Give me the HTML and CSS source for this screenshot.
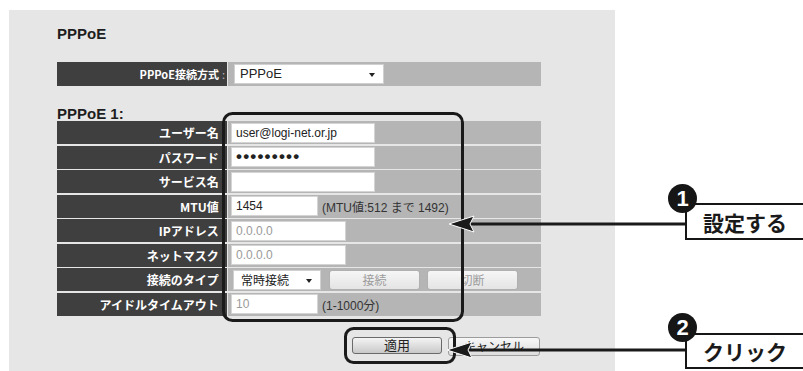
FILE: index.html
```html
<!DOCTYPE html>
<html lang="ja">
<head>
  <meta charset="UTF-8">
  <title>PPPoE</title>
  <link rel="stylesheet" href="styles.css">
</head>
<body>
  <div class="panel">
    <h2 class="title">PPPoE</h2>
    <div class="form form-mode">
      <div class="label">PPPoE接続方式<span class="colon">:</span></div>
      <div class="value"><span class="select select-wide">PPPoE<i class="caret"></i></span></div>
    </div>
    <h3 class="subtitle">PPPoE 1:</h3>
    <div class="form">
      <div class="label">ユーザー名<span class="colon">:</span></div>
      <div class="value"><span class="field">user@logi-net.or.jp</span></div>
      <div class="label">パスワード<span class="colon">:</span></div>
      <div class="value"><span class="field dots">•••••••••</span></div>
      <div class="label">サービス名<span class="colon">:</span></div>
      <div class="value"><span class="field"></span></div>
      <div class="label">MTU値<span class="colon">:</span></div>
      <div class="value"><span class="field field-s">1454</span><span class="note">(MTU値:512 まで 1492)</span></div>
      <div class="label">IPアドレス<span class="colon">:</span></div>
      <div class="value"><span class="field field-m muted">0.0.0.0</span></div>
      <div class="label">ネットマスク<span class="colon">:</span></div>
      <div class="value"><span class="field field-m muted">0.0.0.0</span></div>
      <div class="label">接続のタイプ<span class="colon">:</span></div>
      <div class="value">
        <span class="select select-s">常時接続<i class="caret"></i></span>
        <button class="btn btn-off">接続</button>
        <button class="btn btn-off">切断</button>
      </div>
      <div class="label">アイドルタイムアウト<span class="colon">:</span></div>
      <div class="value"><span class="field field-s muted">10</span><span class="note">(1-1000分)</span></div>
    </div>
    <div class="actions">
      <button class="btn btn-apply">適用</button>
      <button class="btn btn-cancel">キャンセル</button>
    </div>
  </div>

  <!-- 注釈 -->
  <svg class="marks" width="803" height="371" viewBox="0 0 803 371">
    <rect x="223.5" y="113.5" width="239" height="207" rx="9" fill="none" stroke="#1a1a1a" stroke-width="3"/>
    <rect x="345.5" y="328.5" width="109" height="34" rx="8" fill="none" stroke="#1a1a1a" stroke-width="3"/>
    <line x1="468" y1="224" x2="686" y2="224" stroke="#1a1a1a" stroke-width="3"/>
    <polygon points="449,224 474,216 470,224 474,232" fill="#1a1a1a" stroke="#fff" stroke-width="1"/>
    <line x1="466" y1="350" x2="686" y2="350" stroke="#1a1a1a" stroke-width="3"/>
    <polygon points="447,350 472,342 468,350 472,358" fill="#1a1a1a" stroke="#fff" stroke-width="1"/>
  </svg>
  <div class="callout callout-1">
    <span class="tag">設定する</span>
    <span class="num">1</span>
  </div>
  <div class="callout callout-2">
    <span class="tag">クリック</span>
    <span class="num">2</span>
  </div>
</body>
</html>
```

FILE: styles.css
```css
html, body { margin:0;padding:0;width:100%;height:100%;overflow:hidden;background:#fff }
body { font-family:"Liberation Sans", "Noto Sans CJK JP", sans-serif;color:#222;position:relative }

.panel { margin:10px 0 0 9px;width:606px;height:361px;background:#e6e6e6;padding:15px 0 0 48px;box-sizing:border-box }
.title { margin:0;font-size:15px;line-height:18px;font-weight:bold;color:#1e1e1e }
.subtitle { margin:20px 0 0;font-size:15px;line-height:15px;font-weight:bold;color:#1e1e1e }

.form { display:grid;grid-template-columns:170px 313px;column-gap:1px;row-gap:1.5px;grid-auto-rows:23px }
.form-mode { margin-top:19px;grid-auto-rows:24px }
.label { background:#3f3f3f;color:#fff;font-family:"Noto Sans CJK JP", sans-serif;font-weight:bold;font-size:12px;line-height:23px;text-align:right;padding-right:2px;white-space:nowrap }
.form-mode .label { font-size:11px;line-height:24px }
.colon { color:#b8b8b8;margin-left:3px;font-weight:normal }
.value { background:#b5b5b5;display:flex;align-items:center;padding-left:3px;gap:4px }

.field { display:block;box-sizing:border-box;width:144px;height:20px;background:#fff;border:1px solid #d4d4d4;font-size:12px;line-height:18px;padding-left:4px;color:#222;white-space:nowrap }
.field-s { width:87px }
.field-m { width:115px }
.muted { color:#9a9a9a }
.dots { font-size:17px;line-height:17px;letter-spacing:1.2px;font-weight:bold }
.note { font-size:12px;color:#333;font-family:"Liberation Sans", "Noto Sans CJK JP", sans-serif }

.select { position:relative;display:block;box-sizing:border-box;height:20px;background:#fff;border:1px solid #d0d0d0;font-size:13px;line-height:18px;padding-left:5px;color:#222 }
.select-wide { width:150px;margin-left:3px }
.select-s { width:88px;margin-left:2px;padding-left:7px;font-family:"Noto Sans CJK JP", sans-serif;font-size:12px }
.caret { position:absolute;right:8px;top:8px;border-style:solid;border-width:4px 3px 0;border-color:#222 transparent transparent }

.btn { box-sizing:border-box;height:20px;border:1px solid #9c9c9c;border-radius:3px;background:linear-gradient(#f6f6f6, #e4e4e4);font-family:"Noto Sans CJK JP", sans-serif;font-size:12px;line-height:16px;padding:0;color:#222 }
.btn-off { width:91px;color:#9c9c9c;border-color:#b0b0b0;margin-left:4px }
.btn-off + .btn-off { margin-left:3px }

.actions { display:flex;gap:6px;margin-top:21px;padding-left:295px }
.btn-apply { width:90px;height:17px;border-color:#6a6a6a;background:linear-gradient(#f4f4f4, #c9c9c9);line-height:14px;font-size:13px }
.btn-cancel { width:92px;height:19px;line-height:16px;background:linear-gradient(#f7f7f7, #dddddd);font-size:12px }

.marks { position:absolute;left:0;top:0 }

.callout { position:absolute;left:668px;width:160px }
.callout-1 { top:184px }
.callout-2 { top:313px }
.num { position:absolute;left:0;top:0;width:29px;height:29px;border-radius:50%;background:#161616;color:#fff;font-family:"Liberation Sans", sans-serif;font-weight:bold;font-size:22px;line-height:29px;text-align:center }
.tag { position:absolute;left:17px;box-sizing:border-box;width:140px;background:#fff;border:2px solid #161616;border-right:none;font-family:"Noto Sans CJK JP", sans-serif;font-weight:bold;font-size:21px;color:#1a1a1a;padding-left:16px;display:flex;align-items:center }
.callout-1 .tag { top:19px;height:37px }
.callout-2 .tag { top:20px;height:36px }
```
